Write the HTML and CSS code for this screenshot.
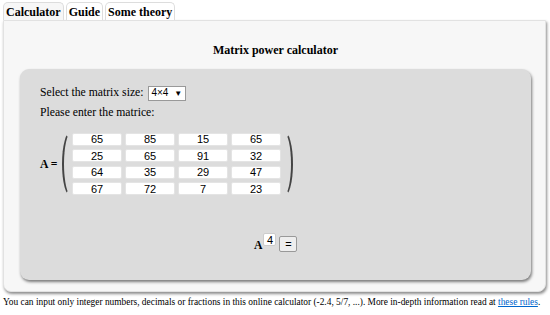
FILE: index.html
```html
<!DOCTYPE html>
<html lang="en">
<head>
    <meta charset="UTF-8">
    <title>Matrix power calculator</title>
    <link rel="stylesheet" href="styles.css">
</head>
<body>
    <div class="tabs">
        <div class="tab active">Calculator</div>
        <div class="tab">Guide</div>
        <div class="tab">Some theory</div>
    </div>
    <div class="panel">
        <h2>Matrix power calculator</h2>
        <div class="inner">
            <div class="row">Select the matrix size:
                <span class="select">4×4 <span class="arrow">▼</span></span>
            </div>
            <div class="row">Please enter the matrice:</div>
            <div class="matrix">
                <span class="label">A =</span>
                <span class="paren left"></span>
                <div class="grid">
                    <input value="65"><input value="85"><input value="15"><input value="65">
                    <input value="25"><input value="65"><input value="91"><input value="32">
                    <input value="64"><input value="35"><input value="29"><input value="47">
                    <input value="67"><input value="72"><input value="7"><input value="23">
                </div>
                <span class="paren right"></span>
            </div>
            <div class="power">
                <span class="base">A</span><input class="exp" value="4"><button class="eq">=</button>
            </div>
        </div>
    </div>
    <p class="note">You can input only integer numbers, decimals or fractions in this online calculator (-2.4, 5/7, ...). More in-depth information read at <a href="#">these rules</a>.</p>
</body>
</html>
```

FILE: styles.css
```css
body {
    font-family: "Liberation Serif", "Times New Roman", serif;
    margin: 0;
    padding: 2px 3px 0 3px;
    background-color: #fff;
    color: #000;
    font-size: 11.7px;
}
.tabs {
    display: flex;
    gap: 2px;
    height: 18px;
}
.tab {
    font-weight: bold;
    font-size: 12px;
    padding: 2px 2px 0 2px;
    border: 1px solid #ddd;
    border-bottom: none;
    border-radius: 5px 5px 0 0;
    background-color: #fff;
}
.tab.active {
    background-color: #f7f7f7;
}
.panel {
    width: 543px;
    height: 272px;
    box-sizing: border-box;
    background-color: #f7f7f7;
    border: 1px solid #e2e2e2;
    border-radius: 0 0 8px 8px;
    box-shadow: 1px 2px 3px rgba(0, 0, 0, 0.45);
    padding: 18px 14px 0 16px;
}
h2 {
    font-size: 12px;
    line-height: 14px;
    text-align: center;
    margin: 4px 0 12px 0;
}
.inner {
    height: 211px;
    box-sizing: border-box;
    background-color: #dcdcdc;
    border-radius: 9px;
    box-shadow: 1px 2px 3px rgba(0, 0, 0, 0.5);
    padding: 16px 0 0 20px;
}
.row {
    height: 20px;
    line-height: 16px;
}
.select {
    display: inline-block;
    font-family: "Liberation Sans", Arial, sans-serif;
    font-size: 10px;
    line-height: 12px;
    background-color: #fff;
    border: 1px solid #999;
    padding: 0 3px 0 2px;
    margin-left: 2px;
    vertical-align: 0;
}
.arrow {
    font-size: 8px;
    margin-left: 3px;
}
.matrix {
    display: flex;
    align-items: center;
    margin-top: 6px;
}
.label {
    font-weight: bold;
    width: 22px;
}
.paren {
    width: 9px;
    height: 66px;
    box-sizing: border-box;
    border: 2px solid #444;
}
.paren.left {
    border-right: none;
    border-top-color: transparent;
    border-bottom-color: transparent;
    border-radius: 9px 0 0 9px / 33px 0 0 33px;
}
.paren.right {
    border-left: none;
    border-top-color: transparent;
    border-bottom-color: transparent;
    border-radius: 0 9px 9px 0 / 0 33px 33px 0;
    margin-left: 3px;
}
.grid {
    display: grid;
    grid-template-columns: repeat(4, 50px);
    column-gap: 3px;
    row-gap: 3.5px;
    margin-left: 1px;
}
input {
    font-family: "Liberation Sans", Arial, sans-serif;
    font-size: 11px;
    text-align: center;
    width: 50px;
    height: 13px;
    box-sizing: border-box;
    border: 1px solid #e4e4e4;
    border-radius: 2px;
    background-color: #fff;
    padding: 0;
    margin: 0;
    line-height: 11px;
}
.power {
    display: flex;
    align-items: flex-start;
    margin: 36px 0 0 214px;
}
.base {
    font-weight: bold;
    margin-top: 6px;
}
.exp {
    width: 13px;
    height: 13px;
    margin: 0 3px 0 1px;
    border-color: #ccc;
}
.eq {
    font-size: 11px;
    width: 18px;
    height: 16px;
    padding: 0;
    margin-top: 3px;
    background-color: #eee;
    border: 1px solid #999;
    border-radius: 2px;
}
.note {
    font-size: 9.4px;
    margin: 5px 0 0 0;
    white-space: nowrap;
}
.note a {
    color: #06c;
}
```
